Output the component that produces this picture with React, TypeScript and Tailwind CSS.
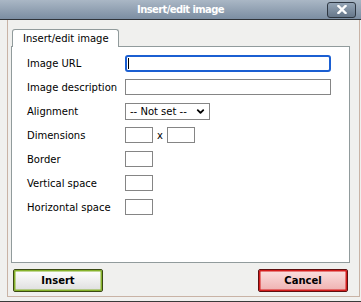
import { ChevronDown } from "lucide-react";

const rows = [
  { label: "Image URL", kind: "url" },
  { label: "Image description", kind: "wide" },
  { label: "Alignment", kind: "select" },
  { label: "Dimensions", kind: "dims" },
  { label: "Border", kind: "small" },
  { label: "Vertical space", kind: "small" },
  { label: "Horizontal space", kind: "small" },
];

function SmallBox() {
  return <div className="h-[16px] w-[28px] border border-[#858585] bg-white" />;
}

export default function App() {
  return (
    <div className="flex h-[302px] w-[361px] flex-col border-b border-[#3a3a3a] bg-[#f0f0ee] font-['DejaVu_Sans',sans-serif] text-[10px] text-black">
      {/* title bar */}
      <div className="grid h-[20px] grid-cols-[1fr_auto_1fr] items-center border-b border-[#2f3338] bg-gradient-to-b from-[#aab7c5] to-[#7c8ea2]">
        <div />
        <span className="font-bold tracking-[-0.6px] text-white">Insert/edit image</span>
        <div className="flex justify-end pr-[5px]">
          <button className="flex h-[16px] w-[29px] items-center justify-center rounded-[3px] border border-[#2e3742] bg-gradient-to-b from-[#95a5b6] to-[#66778a]">
            <svg width="10" height="9" viewBox="0 0 10 9">
              <path d="M1.5 1 L8.5 8 M8.5 1 L1.5 8" stroke="white" strokeWidth="2.4" strokeLinecap="square" />
            </svg>
          </button>
        </div>
      </div>

      {/* dialog frame */}
      <div className="mb-[4px] ml-[7px] mr-[1px] flex flex-1 flex-col border-x border-b border-[#c9b3a5] pl-[3px] pr-[9px] pt-[9px]">
        <div className="relative z-10 -mb-px ml-[1px] flex h-[18px] w-[107px] items-center rounded-t-[3px] border border-b-0 border-[#919b9c] bg-white pl-[10px]">
          Insert/edit image
        </div>
        <div className="flex h-[217px] flex-col gap-[8px] border border-[#919b9c] bg-white pl-[15px] pt-[8px]">
          {rows.map((r) => (
            <div key={r.label} className="flex h-[16px] items-center">
              <span className="w-[98px]">{r.label}</span>
              {r.kind === "url" && (
                <div className="flex h-[17px] w-[206px] items-center rounded-[3px] border-2 border-[#1b5fd2] bg-white pl-[1px]">
                  <div className="h-[11px] w-px bg-black" />
                </div>
              )}
              {r.kind === "wide" && <div className="h-[16px] w-[206px] border border-[#858585] bg-white" />}
              {r.kind === "select" && (
                <div className="flex h-[17px] w-[85px] items-center justify-between border border-[#858585] bg-white pl-[4px] pr-[3px]">
                  <span>-- Not set --</span>
                  <ChevronDown size={11} strokeWidth={4} />
                </div>
              )}
              {r.kind === "dims" && (
                <div className="flex items-center gap-[4px]">
                  <SmallBox />
                  <span>x</span>
                  <SmallBox />
                </div>
              )}
              {r.kind === "small" && <SmallBox />}
            </div>
          ))}
        </div>

        <div className="mt-[6px] flex justify-between pl-[2px] pr-[2px]">
          <button className="flex h-[23px] w-[90px] items-center justify-center rounded-[2px] border border-[#3b4a14] bg-gradient-to-b from-white to-[#dedede] font-bold shadow-[inset_0_0_0_1.5px_#86b22c]">
            Insert
          </button>
          <button className="flex h-[23px] w-[90px] items-center justify-center rounded-[2px] border border-[#5e1010] bg-gradient-to-b from-[#fbe0e0] to-[#eeb0b0] font-bold shadow-[inset_0_0_0_1.5px_#d41c1c]">
            Cancel
          </button>
        </div>
      </div>
    </div>
  );
}
